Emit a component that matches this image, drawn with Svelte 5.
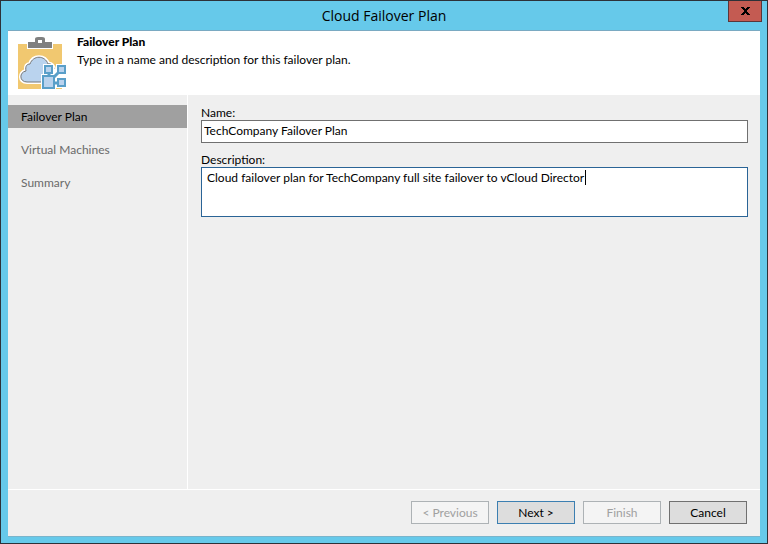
<script>
  import { onMount } from "svelte";

  const steps = ["Failover Plan", "Virtual Machines", "Summary"];
  const last = steps.length - 1;

  let current = $state(0);
  let name = $state("TechCompany Failover Plan");
  let description = $state(
    "Cloud failover plan for TechCompany full site failover to vCloud Director"
  );
  let box;
  let caret = $state(null);

  // steady caret, shown while the cursor is on the first line
  const updateCaret = () => {
    const before = box.value.slice(0, box.selectionEnd);
    const style = getComputedStyle(box);
    const ctx = document.createElement("canvas").getContext("2d");
    ctx.font = `${style.fontSize} ${style.fontFamily}`;
    const width = ctx.measureText(before).width;
    const fits = !before.includes("\n") && width < box.clientWidth - 12;
    caret = fits ? Math.floor(width) : null;
  };

  onMount(() => {
    box.focus();
    box.setSelectionRange(description.length, description.length);
    updateCaret();
  });
</script>

<div class="window">
  <div class="titlebar">
    <h1>Cloud Failover Plan</h1>
    <button class="close" aria-label="Close">
      <svg width="9" height="8" viewBox="0 0 9 8" shape-rendering="crispEdges">
        <path d="M0 0h3v1h1v1h1v-1h1v-1h3v1h-1v1h-1v1h-1v2h1v1h1v1h1v1h-3v-1h-1v-1h-1v1h-1v1h-3v-1h1v-1h1v-1h1v-2h-1v-1h-1v-1h-1z" />
      </svg>
    </button>
  </div>

  <main>
    <header>
      <svg class="logo" width="50" height="54" viewBox="0 0 50 54" aria-hidden="true">
        <path fill="#f1c870" d="M1 7h44v45h-44z" />
        <path fill="#fff" d="M10 5h26v7h-26z" />
        <path fill="#808080" d="M11 5h7v-3q0-2 3-2h4q3 0 3 2v3h7v6h-24z" />
        <path fill="#fff" d="M21 3h4v3h-4z" />
        <g fill="#bad3ee">
          <path
            stroke="#fff"
            stroke-width="4"
            d="M10 45C2 45 2 35 9 34C8 29 10 27 13 27C16 18 28 18 31 27C34 26 37 29 37 33V45Z"
          />
          <path
            stroke="#777"
            d="M10 45C2 45 2 35 9 34C8 29 10 27 13 27C16 18 28 18 31 27C34 26 37 29 37 33V45Z"
          />
        </g>
        <path fill="#fff" d="M26 27h11v5h2v-5h11v11h-5v2h5v11h-11v1h-15v-15h2z" />
        <path stroke="#5a9fc9" stroke-width="3" d="M32 35v5M43 34l-8 8M36 46h5" />
        <g fill="#bad3ee" stroke="#5a9fc9" stroke-width="2">
          <path d="M28 29h7v7h-7zM41 29h7v7h-7zM41 42h7v7h-7z" />
          <path d="M26 39h11v12h-11z" />
        </g>
      </svg>
      <div>
        <h2>Failover Plan</h2>
        <p>Type in a name and description for this failover plan.</p>
      </div>
    </header>

    <div class="body">
      <nav>
        {#each steps as step, i}
          <button class="step" class:active={i === current} onclick={() => (current = i)}>
            {step}
          </button>
        {/each}
      </nav>

      <form>
        <label for="name">Name:</label>
        <input id="name" type="text" bind:value={name} />
        <label for="description">Description:</label>
        <div class="area">
          <textarea
            id="description"
            spellcheck="false"
            bind:this={box}
            bind:value={description}
            oninput={updateCaret}
            onkeyup={updateCaret}
            onclick={updateCaret}
            onfocus={updateCaret}
            onblur={() => (caret = null)}
          ></textarea>
          {#if caret !== null}
            <span class="caret" style="left: {caret + 6}px"></span>
          {/if}
        </div>
      </form>
    </div>

    <footer>
      <button class="btn" disabled={current === 0} onclick={() => current--}>&lt; Previous</button>
      <button class="btn next" disabled={current === last} onclick={() => current++}>
        Next &gt;
      </button>
      <button class="btn" disabled={current !== last}>Finish</button>
      <button class="btn">Cancel</button>
    </footer>
  </main>
</div>

<style>
  :global(body) {
    margin: 0;
  }

  .window,
  button,
  input,
  textarea {
    font-family: Lato, "Open Sans", sans-serif;
    font-size: 12px;
    line-height: 16px;
    color: #000;
  }

  .window {
    box-sizing: border-box;
    display: flex;
    flex-direction: column;
    min-height: 100vh;
    padding: 0 7px 6px;
    border: 1px solid #2d3138;
    background: #66c9ea;
  }

  .titlebar {
    display: grid;
    grid-template-columns: 1fr auto 1fr;
    align-items: start;
    height: 29px;
  }

  h1 {
    grid-column: 2;
    margin: 0;
    font-family: "Open Sans", sans-serif;
    font-size: 14px;
    font-weight: 400;
    line-height: 29px;
  }

  .close {
    justify-self: end;
    display: flex;
    align-items: center;
    justify-content: center;
    box-sizing: border-box;
    width: 34px;
    height: 21px;
    margin-right: -2px;
    padding: 0;
    border: 1px solid #5b3538;
    border-top: 0;
    background: #c45b52;
  }

  main {
    flex: 1;
    display: flex;
    flex-direction: column;
    border-top: 1px solid #7aaac2;
    border-bottom: 1px solid #7ab4cb;
    background: #efefef;
  }

  header {
    display: flex;
    gap: 10px;
    height: 58px;
    padding: 6px 9px 0;
    background: #fff;
  }

  .logo {
    flex: none;
  }

  h2 {
    margin: -3px 0 2px;
    font-size: 12px;
    font-weight: 900;
    line-height: 16px;
  }

  p {
    margin: 0;
  }

  .body {
    flex: 1;
    display: flex;
  }

  nav {
    flex: none;
    display: flex;
    flex-direction: column;
    gap: 10px;
    width: 179px;
    padding-top: 10px;
    border-right: 1px solid #fff;
  }

  .step {
    height: 23px;
    padding: 0 13px;
    border: 0;
    background: none;
    color: #6a6a6a;
    text-align: left;
  }

  .step.active {
    background: #a0a0a0;
    color: #000;
  }

  form {
    flex: 1;
    display: flex;
    flex-direction: column;
    padding: 11px 12px 12px 13px;
  }

  label {
    line-height: 14px;
  }

  input,
  textarea {
    display: block;
    box-sizing: border-box;
    width: 100%;
    margin: 0;
    border: 1px solid #707070;
    border-radius: 0;
    outline: none;
    background: #fff;
  }

  input {
    height: 23px;
    margin-bottom: 10px;
    padding: 0 2px 2px;
  }

  .area {
    position: relative;
  }

  textarea {
    height: 50px;
    padding: 2px 5px;
    resize: none;
    caret-color: transparent;
  }

  textarea:focus {
    border-color: #2a6496;
  }

  .caret {
    position: absolute;
    top: 3px;
    width: 1px;
    height: 15px;
    background: #000;
    pointer-events: none;
  }

  footer {
    display: flex;
    justify-content: flex-end;
    gap: 8px;
    padding: 11px 13px 12px;
    border-top: 1px solid #fff;
  }

  .btn {
    width: 78px;
    height: 23px;
    padding: 0;
    border: 1px solid #707070;
    background: #dddddd;
  }

  .btn.next {
    border-color: #3c7fb1;
  }

  .btn:disabled {
    border-color: #adb2b5;
    background: #f4f4f4;
    color: #a0a0a0;
  }
</style>
